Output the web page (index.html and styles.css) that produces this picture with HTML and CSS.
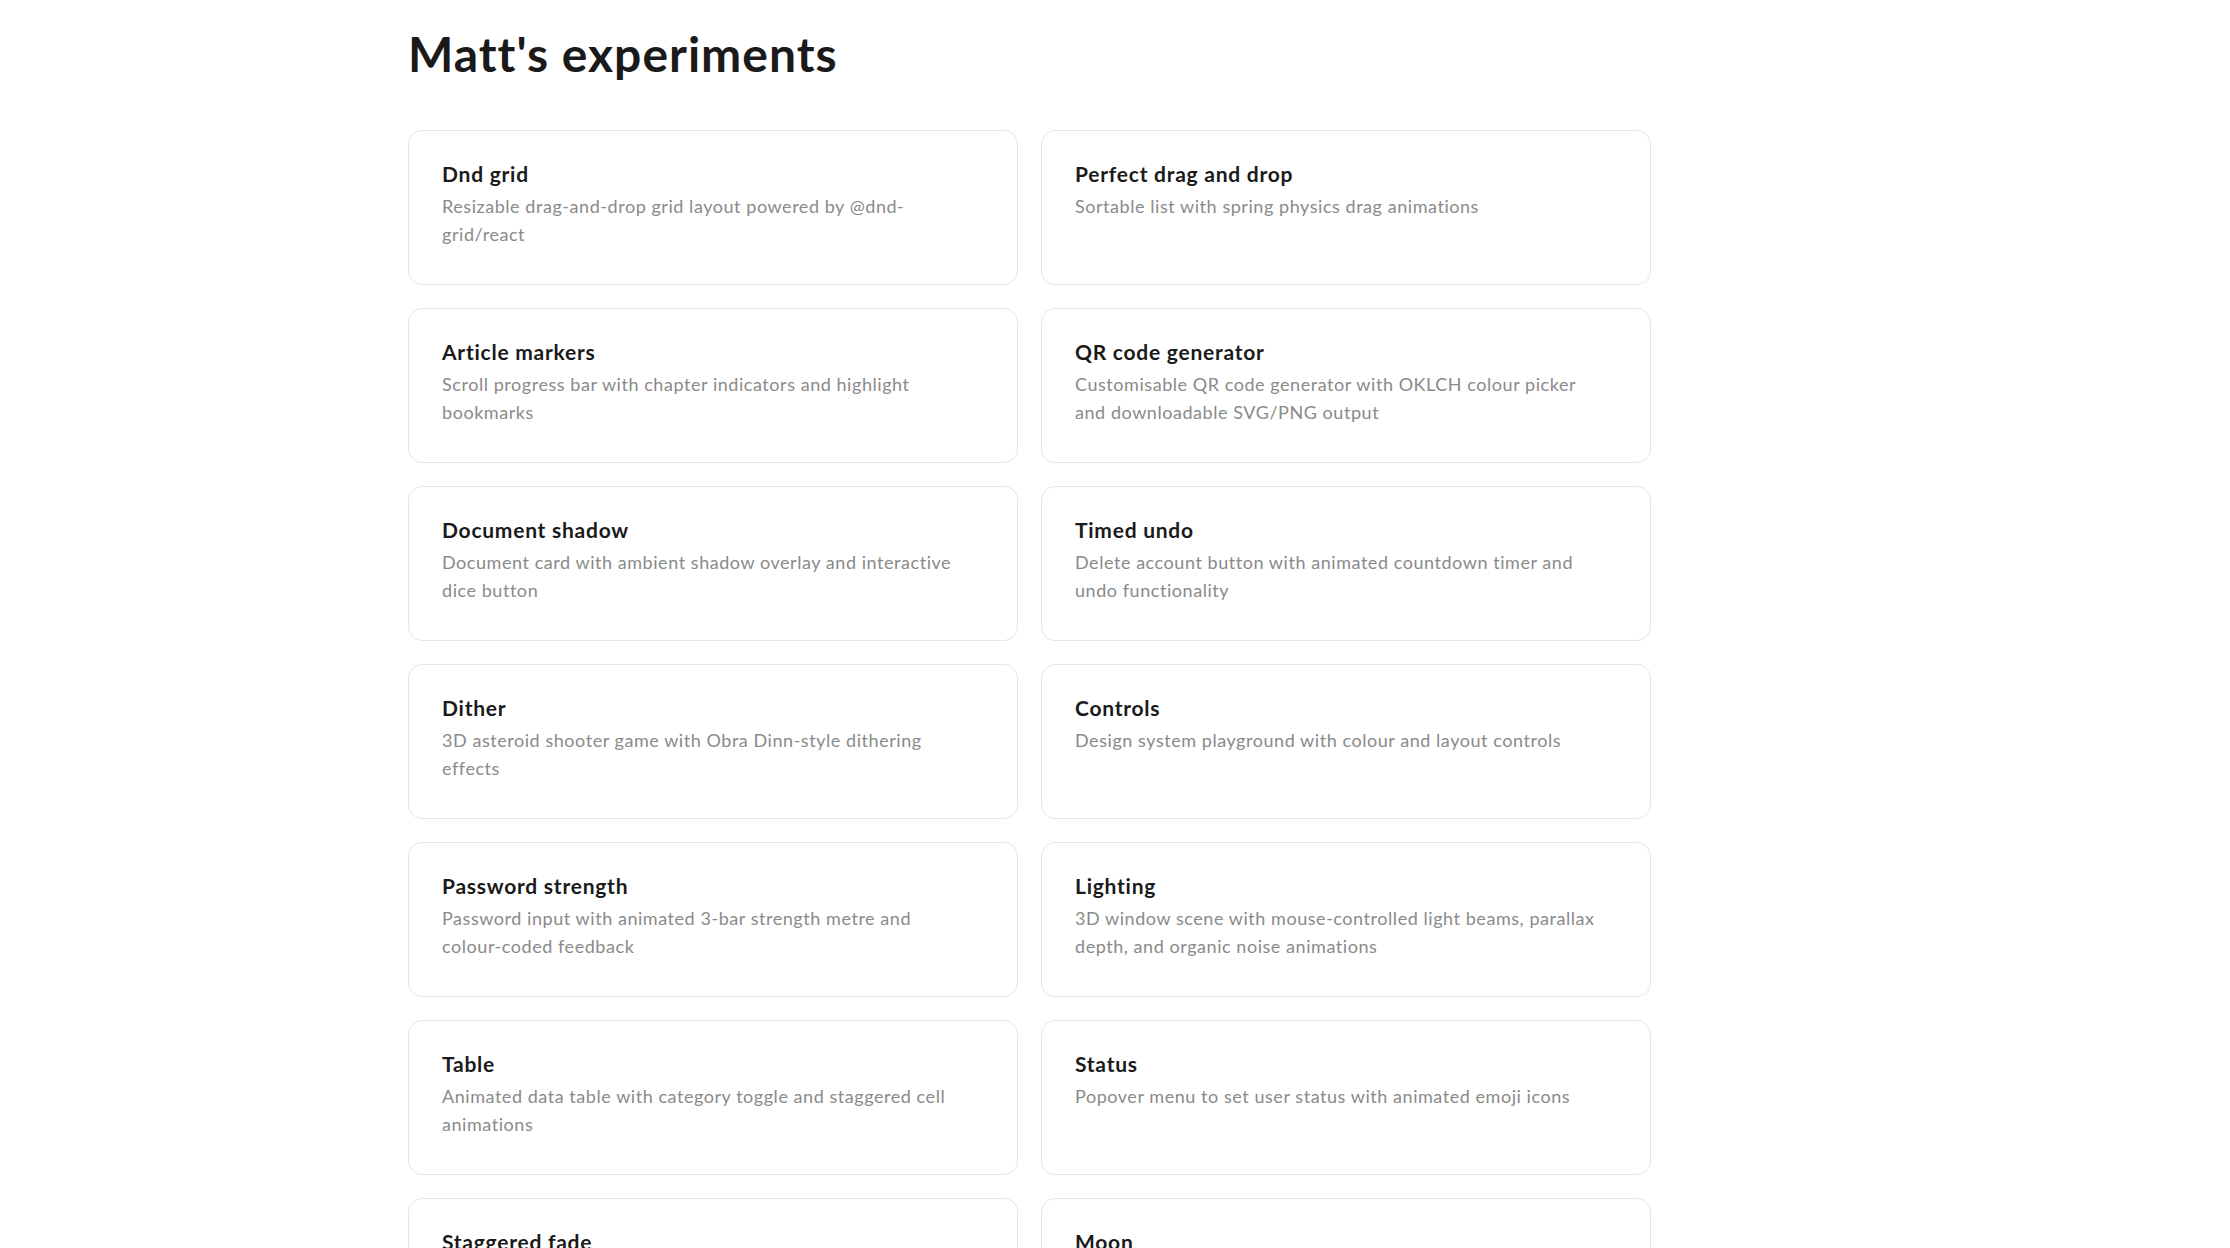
FILE: index.html
```html
<!DOCTYPE html>
<html lang="en">
<head>
  <meta charset="UTF-8">
  <meta name="viewport" content="width=device-width, initial-scale=1.0">
  <title>Matt's experiments</title>
  <link rel="stylesheet" href="styles.css">
</head>
<body>
  <main class="page">
    <h1 class="page-title">Matt's experiments</h1>

    <ul class="experiments">
      <li class="experiment">
        <h2 class="experiment-name">Dnd grid</h2>
        <p class="experiment-desc">Resizable drag-and-drop grid layout powered by @dnd-grid/react</p>
      </li>
      <li class="experiment">
        <h2 class="experiment-name">Perfect drag and drop</h2>
        <p class="experiment-desc">Sortable list with spring physics drag animations</p>
      </li>
      <li class="experiment">
        <h2 class="experiment-name">Article markers</h2>
        <p class="experiment-desc">Scroll progress bar with chapter indicators and highlight bookmarks</p>
      </li>
      <li class="experiment">
        <h2 class="experiment-name">QR code generator</h2>
        <p class="experiment-desc">Customisable QR code generator with OKLCH colour picker and downloadable SVG/PNG output</p>
      </li>
      <li class="experiment">
        <h2 class="experiment-name">Document shadow</h2>
        <p class="experiment-desc">Document card with ambient shadow overlay and interactive dice button</p>
      </li>
      <li class="experiment">
        <h2 class="experiment-name">Timed undo</h2>
        <p class="experiment-desc">Delete account button with animated countdown timer and undo functionality</p>
      </li>
      <li class="experiment">
        <h2 class="experiment-name">Dither</h2>
        <p class="experiment-desc">3D asteroid shooter game with Obra Dinn-style dithering effects</p>
      </li>
      <li class="experiment">
        <h2 class="experiment-name">Controls</h2>
        <p class="experiment-desc">Design system playground with colour and layout controls</p>
      </li>
      <li class="experiment">
        <h2 class="experiment-name">Password strength</h2>
        <p class="experiment-desc">Password input with animated 3-bar strength metre and colour-coded feedback</p>
      </li>
      <li class="experiment">
        <h2 class="experiment-name">Lighting</h2>
        <p class="experiment-desc">3D window scene with mouse-controlled light beams, parallax depth, and organic noise animations</p>
      </li>
      <li class="experiment">
        <h2 class="experiment-name">Table</h2>
        <p class="experiment-desc">Animated data table with category toggle and staggered cell animations</p>
      </li>
      <li class="experiment">
        <h2 class="experiment-name">Status</h2>
        <p class="experiment-desc">Popover menu to set user status with animated emoji icons</p>
      </li>
      <li class="experiment">
        <h2 class="experiment-name">Staggered fade</h2>
        <p class="experiment-desc">Text that fades in word by word with staggered timing</p>
      </li>
      <li class="experiment">
        <h2 class="experiment-name">Moon</h2>
        <p class="experiment-desc">Moon phase illustration with animated terminator shadow</p>
      </li>
    </ul>
  </main>
</body>
</html>
```

FILE: styles.css
```css
body {
  margin: 0;
  background: #fff;
  color: #1a1a1a;
  font-family: Lato, "Noto Sans", sans-serif;
}

.page {
  width: 1243px;
  margin: 0 0 0 408px;
  padding-top: 25px;
}

.page-title {
  margin: 0 0 47px;
  font-size: 48px;
  font-weight: 700;
  line-height: 1.2;
  letter-spacing: 1px;
}

/* two-column card grid */
.experiments {
  list-style: none;
  margin: 0;
  padding: 0;
  display: grid;
  grid-template-columns: 1fr 1fr;
  grid-auto-rows: 155px;
  gap: 23px;
}

.experiment {
  box-sizing: border-box;
  border: 1px solid #e6e6e6;
  border-radius: 14px;
  padding: 28px 47px 28px 33px;
  background: #fff;
}

.experiment-name {
  margin: 0 0 4px;
  font-size: 21px;
  font-weight: 700;
  line-height: 29px;
  letter-spacing: 0.75px;
  color: #1a1a1a;
}

.experiment-desc {
  margin: 0;
  font-size: 18px;
  line-height: 28px;
  letter-spacing: 0.55px;
  color: #8a8a8a;
}
```
